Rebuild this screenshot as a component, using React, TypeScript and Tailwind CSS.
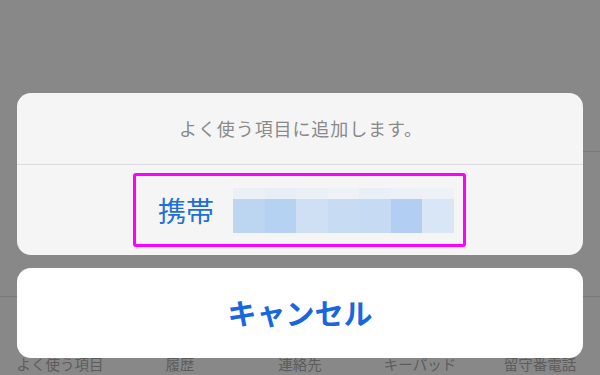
const jp = { fontFamily: '"Noto Sans CJK JP", "Noto Sans", sans-serif' };

const tabs = ['よく使う項目', '履歴', '連絡先', 'キーパッド', '留守番電話'];

// pixelated (blurred) phone number
const mosaic = [
	{ top: '#eaf0f6', main: '#bcd6f2' },
	{ top: '#e8eef6', main: '#b6d2f2' },
	{ top: '#ebf0f6', main: '#cfe0f4' },
	{ top: '#eef2f7', main: '#c7dcf3' },
	{ top: '#e9eff6', main: '#c6dbf3' },
	{ top: '#ecf1f7', main: '#b2cef3' },
	{ top: '#eef2f7', main: '#d8e6f6' },
];

export default function App() {
	return (
		<div className="relative h-[375px] w-[600px] overflow-hidden bg-[#888888]" style={jp}>
			{/* page behind the dimmed overlay */}
			<div className="flex h-full flex-col">
				<div className="h-[151px]" />
				<div className="ml-[20px] h-px bg-[#787878]" />
				<div className="h-[144px]" />
				<div className="h-px bg-[#777777]" />
				<div className="flex-1" />
				<div className="grid h-[23px] grid-cols-5 text-center text-[14.5px] leading-[23px] text-[#5c5c5c]">
					{tabs.map((t) => (
						<span key={t}>{t}</span>
					))}
				</div>
			</div>

			{/* action sheet */}
			<div className="absolute inset-0 flex flex-col px-[17px] pt-[93px]">
				<div className="h-[162px] overflow-hidden rounded-[14px] bg-[#f5f5f6]">
					<div className="flex h-[71px] items-center justify-center pl-[2px] text-[18px] tracking-[0.9px] text-[#8a8a8a]">
						よく使う項目に追加します。
					</div>
					<div className="h-px bg-[#dcdcde]" />
					<div className="flex h-[90px] items-start pl-[116px] pt-[8px]">
						<div className="flex h-[74px] w-[333px] items-center rounded-[3px] border-[3px] border-[#ff00ff] pl-[22px]">
							<span className="text-[28px] leading-none text-[#1f6fd6]">携帯</span>
							<div className="ml-[19px] flex h-[45px] w-[221px]">
								{mosaic.map((m, i) => (
									<div key={i} className="flex flex-1 flex-col">
										<div className="h-[11px]" style={{ backgroundColor: m.top }} />
										<div className="flex-1" style={{ backgroundColor: m.main }} />
									</div>
								))}
							</div>
						</div>
					</div>
				</div>
				<div className="mt-[13px] flex h-[90px] items-center justify-center rounded-[14px] bg-white">
					<span className="text-[29px] font-bold text-[#1866e0]">キャンセル</span>
				</div>
			</div>
		</div>
	);
}
